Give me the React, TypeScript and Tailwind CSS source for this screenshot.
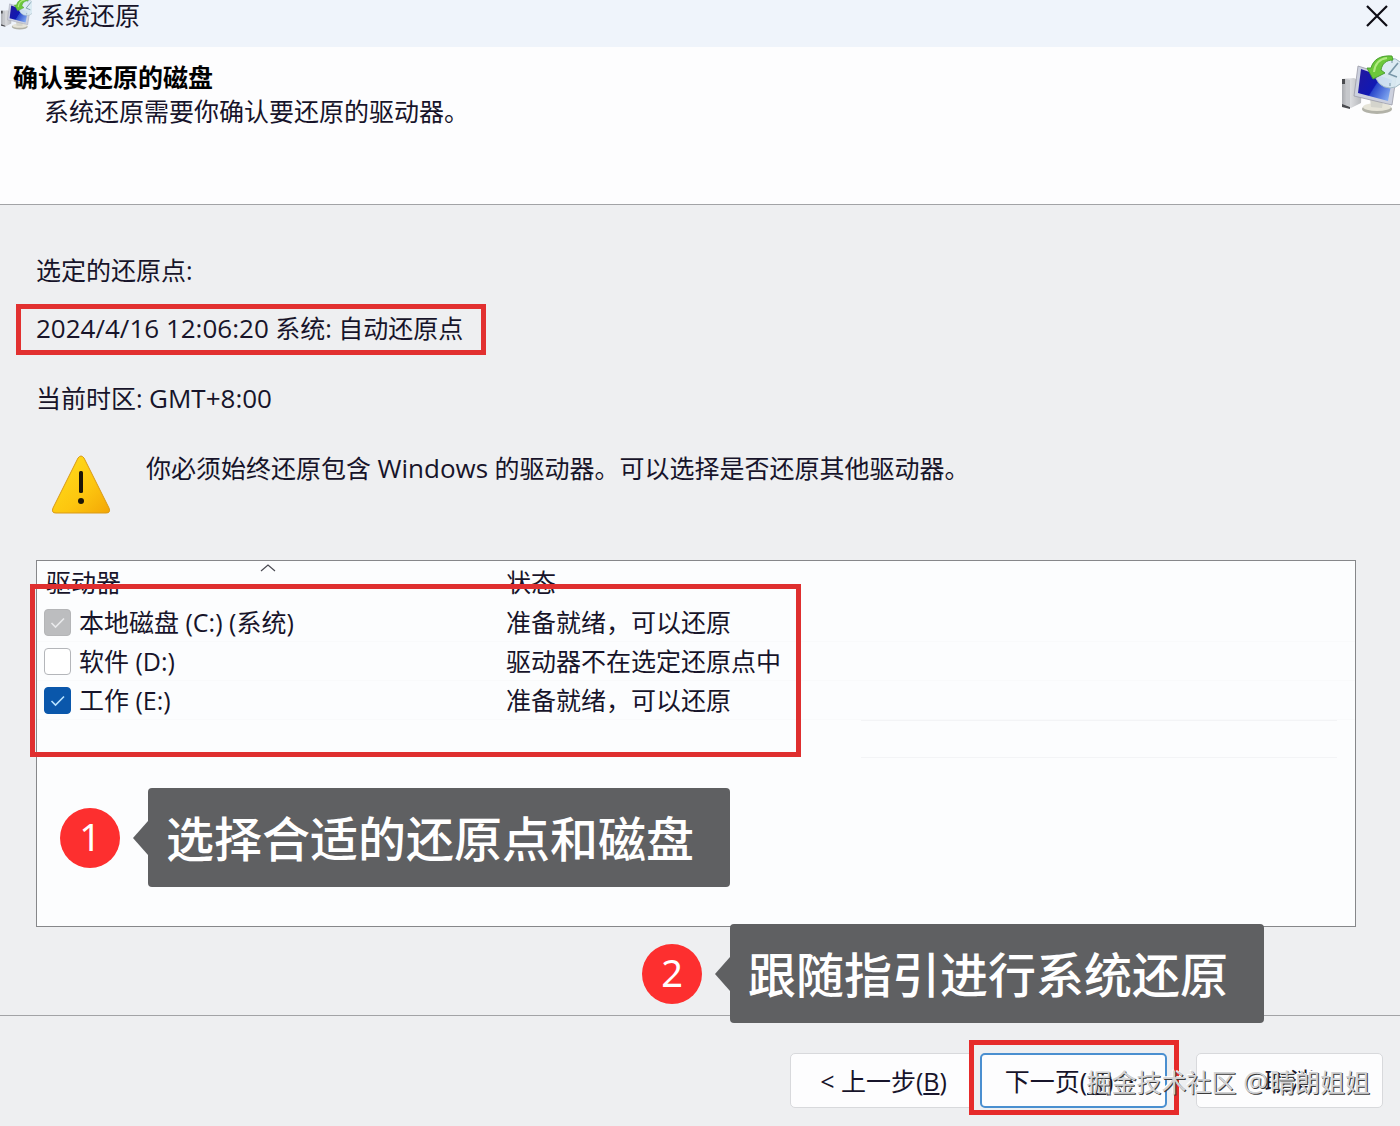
import React, { useId, useState } from "react";

type Drive = {
  name: string;
  status: string;
  checked: boolean;
  locked?: boolean;
};

const DRIVES: Drive[] = [
  { name: "本地磁盘 (C:) (系统)", status: "准备就绪，可以还原", checked: true, locked: true },
  { name: "软件 (D:)", status: "驱动器不在选定还原点中", checked: false },
  { name: "工作 (E:)", status: "准备就绪，可以还原", checked: true },
];

function RestoreIcon({ className }: { className: string }) {
  const id = useId();
  return (
    <svg viewBox="0 0 60 60" className={className} aria-hidden="true">
      <defs>
        <linearGradient id={`${id}s`} x1="0" y1="0.2" x2="1" y2="0.8">
          <stop offset="0" stopColor="#2018a0" />
          <stop offset="0.5" stopColor="#1018b4" />
          <stop offset="0.53" stopColor="#2a48cc" />
          <stop offset="1" stopColor="#86aef2" />
        </linearGradient>
        <linearGradient id={`${id}t`} x1="0" y1="0" x2="1" y2="0">
          <stop offset="0" stopColor="#a9abb0" />
          <stop offset="0.4" stopColor="#dcdde0" />
          <stop offset="1" stopColor="#b4b6ba" />
        </linearGradient>
      </defs>
      <path d="M2 24 L14 23 L22 27 L21 48 L11 53 L2 51 Z" fill={`url(#${id}t)`} />
      <path d="M2 24 L5 24 L5 29 L2 29 Z M2 49 L10 52 L10 54 L2 52 Z" fill="#4a4b4f" />
      <path d="M6 25 L10 25 L10 51 L6 50 Z" fill="#c6c8cc" />
      <ellipse cx="37" cy="54" rx="15" ry="5" fill="#b2b2a8" />
      <ellipse cx="37" cy="52" rx="14" ry="4" fill="#e6e4d8" />
      <path d="M30 43 L43 46 L42 53 L31 52 Z" fill="#d4d4cc" />
      <path d="M18 11 L56 23 L52 50 L14 41 Z" fill="#ccd0de" stroke="#9a9ca8" strokeWidth="0.8" />
      <path d="M21 14 L52 25 L48 46 L18 38 Z" fill={`url(#${id}s)`} />
      <circle cx="50" cy="18" r="15" fill="#d9e9f2" fillOpacity="0.92" stroke="#a3b9c4" strokeWidth="1" />
      <path d="M52 5 V8 M50 31 V28 M38 18 H41" stroke="#8ea9b6" strokeWidth="1.3" />
      <path d="M58 8 L49 19 L57 22" fill="none" stroke="#7897a8" strokeWidth="1.6" />
      <path
        d="M52 1 C40 0 33 5 31 13 L27 13 L33 24 L45 18 L41 15 C42 9 46 5 53 5 Z"
        fill="#6cc83a"
        stroke="#459a2c"
        strokeWidth="0.9"
      />
      <path d="M47 3 C39 4 35 9 34 17" fill="none" stroke="#b0ea80" strokeWidth="2" />
    </svg>
  );
}

function WarningIcon() {
  const id = useId();
  return (
    <svg viewBox="0 0 60 60" className="h-[60px] w-[60px] shrink-0" role="img" aria-label="警告">
      <defs>
        <linearGradient id={id} x1="0" y1="0" x2="1" y2="1">
          <stop offset="0" stopColor="#ffe01c" />
          <stop offset="0.6" stopColor="#fdc60f" />
          <stop offset="1" stopColor="#f3a606" />
        </linearGradient>
      </defs>
      <path
        d="M27 3 Q30 -1 33 3 L58 53 Q60 58 55 58 H5 Q0 58 2 53 Z"
        fill={`url(#${id})`}
        stroke="#d99a18"
        strokeWidth="1"
      />
      <rect x="28" y="16" width="4" height="22" rx="1.5" fill="#1c1608" />
      <circle cx="30" cy="46" r="3" fill="#1c1608" />
    </svg>
  );
}

function Callout({ step, text, className }: { step: number; text: string; className: string }) {
  return (
    <div className={`absolute z-20 flex items-center whitespace-nowrap ${className}`}>
      <span className="flex h-[60px] w-[60px] items-center justify-center rounded-full bg-[#fd2f2f] pb-1 font-['Noto_Sans','Noto_Sans_CJK_SC',sans-serif] text-[38px] leading-none text-white">
        {step}
      </span>
      <svg viewBox="0 0 16 34" className="ml-3 h-[34px] w-4" aria-hidden="true">
        <path d="M16 0 L1 17 L16 34 Z" fill="#5f6062" />
      </svg>
      <p className="rounded bg-[#5f6062] pt-[18px] pr-9 pb-4 pl-[18px] text-[48px] leading-[65px] font-medium text-white">
        {text}
      </p>
    </div>
  );
}

function DriveRow({ drive }: { drive: Drive }) {
  const id = useId();
  const [checked, setChecked] = useState(drive.checked);
  return (
    <tr className="h-[39px]">
      <td className="border-b border-[#f9fafb] pl-[7px]">
        <div className="flex items-center gap-2">
          <span className="relative flex h-[27px] w-[27px]">
            <input
              id={id}
              type="checkbox"
              checked={checked}
              disabled={drive.locked}
              onChange={(e) => setChecked(e.target.checked)}
              className="h-[27px] w-[27px] appearance-none rounded border border-[#b4b6ba] bg-white checked:border-[#0a57ab] checked:bg-[#0a57ab] disabled:border-[#b4b5b7] disabled:bg-[#bcbdbf]"
            />
            {checked && (
              <svg viewBox="0 0 27 27" className="pointer-events-none absolute inset-0" aria-hidden="true">
                <path
                  d="M7.5 14 L11.5 18 L20 9.5"
                  fill="none"
                  stroke={drive.locked ? "#e9eaec" : "#b8e2ff"}
                  strokeWidth="1.6"
                />
              </svg>
            )}
          </span>
          <label htmlFor={id}>{drive.name}</label>
        </div>
      </td>
      <td className="border-b border-[#f9fafb]">{drive.status}</td>
    </tr>
  );
}

const BUTTON = "h-[55px] w-[187px] rounded-[5px] bg-[#fdfdfe] text-[25px] leading-[34px] whitespace-nowrap";

export default function App() {
  return (
    <div className="relative flex min-h-screen flex-col overflow-hidden bg-[#eeeff1] font-['Open_Sans','Noto_Sans_CJK_SC',sans-serif] text-[25px] leading-[34px] text-[#17142a]">
      <header className="flex h-[47px] items-start justify-between bg-[#eff4fb]">
        <div className="flex items-start gap-2">
          <RestoreIcon className="-mt-0.5 h-8 w-8" />
          <h1 className="leading-[30px]">系统还原</h1>
        </div>
        <button type="button" aria-label="关闭" className="mt-1 mr-[11px] h-6 w-6">
          <svg viewBox="0 0 24 24" className="h-6 w-6" aria-hidden="true">
            <path d="M2 2 L22 22 M22 2 L2 22" stroke="#0d0c14" strokeWidth="2.2" fill="none" />
          </svg>
        </button>
      </header>

      <section className="flex h-[158px] items-start justify-between border-b border-[#a2a3a6] bg-[#fdfdfe] pt-2">
        <div className="pt-[5px] pl-[13px]">
          <h2 className="font-bold text-black">确认要还原的磁盘</h2>
          <p className="pl-[31px]">系统还原需要你确认要还原的驱动器。</p>
        </div>
        <RestoreIcon className="h-[60px] w-[60px]" />
      </section>

      <main className="relative flex grow flex-col pr-11 pl-9">
        <p className="mt-12">选定的还原点:</p>
        <p className="mt-[17px] -ml-5 self-start border-[5px] border-[#e23030] pt-0.5 pr-[18px] pb-[5px] pl-[15px]">
          <span className="text-[26px]">2024/4/16 12:06:20</span> 系统: 自动还原点
        </p>
        <p className="mt-[26px]">
          当前时区: <span className="text-[26px]">GMT+8:00</span>
        </p>
        <div className="mt-9 flex items-start gap-[35px] pl-[15px]">
          <div className="pt-1">
            <WarningIcon />
          </div>
          <p>
            你必须始终还原包含 <span className="text-[26px]">Windows</span> 的驱动器。可以选择是否还原其他驱动器。
          </p>
        </div>

        <div className="relative mt-[45px] h-[367px] border border-[#86878a] bg-[#fcfdfe]">
          <table className="w-full border-separate border-spacing-0 text-left">
            <thead>
              <tr className="h-[42px]">
                <th className="relative w-[469px] pl-[9px] font-normal">
                  驱动器
                  <svg viewBox="0 0 16 8" className="absolute top-[3px] left-[223px] h-2 w-4" aria-hidden="true">
                    <path d="M1 7 L8 1 L15 7" fill="none" stroke="#4a4a52" strokeWidth="1.2" />
                  </svg>
                </th>
                <th className="font-normal">状态</th>
              </tr>
            </thead>
            <tbody>
              {DRIVES.map((d) => (
                <DriveRow key={d.name} drive={d} />
              ))}
            </tbody>
          </table>
          <div className="mr-[18px] ml-[824px] h-[38px] border-y border-[#f3f4f6]" />
          <div className="pointer-events-none absolute top-[23px] -left-[7px] h-[173px] w-[771px] border-[5px] border-[#df2f2f]" />
          <Callout step={1} text="选择合适的还原点和磁盘" className="top-[227px] left-[23px]" />
        </div>
        <Callout step={2} text="跟随指引进行系统还原" className="-bottom-2 left-[642px]" />
      </main>

      <footer className="relative flex h-[111px] items-start justify-end border-t border-[#a2a3a6] pt-[37px] pr-[17px]">
        <button type="button" className={`${BUTTON} border border-[#d8d9dc]`}>
          &lt; 上一步(<u className="underline-offset-2">B</u>)
        </button>
        <div className="-mt-[13px] -ml-2 border-[5px] border-[#e62b2b] bg-[#eeeff1] pt-2 pr-[7px] pb-0.5 pl-[6px]">
          <button type="button" className={`${BUTTON} border-2 border-[#4a8fd0] pr-2`}>
            下一页(<u className="underline-offset-2">N</u>) &gt;
          </button>
        </div>
        <button type="button" className={`${BUTTON} ml-[17px] border border-[#d8d9dc]`}>
          取消
        </button>
        <p className="pointer-events-none absolute top-12 right-[30px] text-[#d2d3d5] [text-shadow:1px_1px_0_#3a3a3a,-1px_-1px_0_#fff]">
          掘金技术社区 <span className="pr-0.5 text-[28px]">@</span>晴朗姐姐
        </p>
      </footer>
    </div>
  );
}
